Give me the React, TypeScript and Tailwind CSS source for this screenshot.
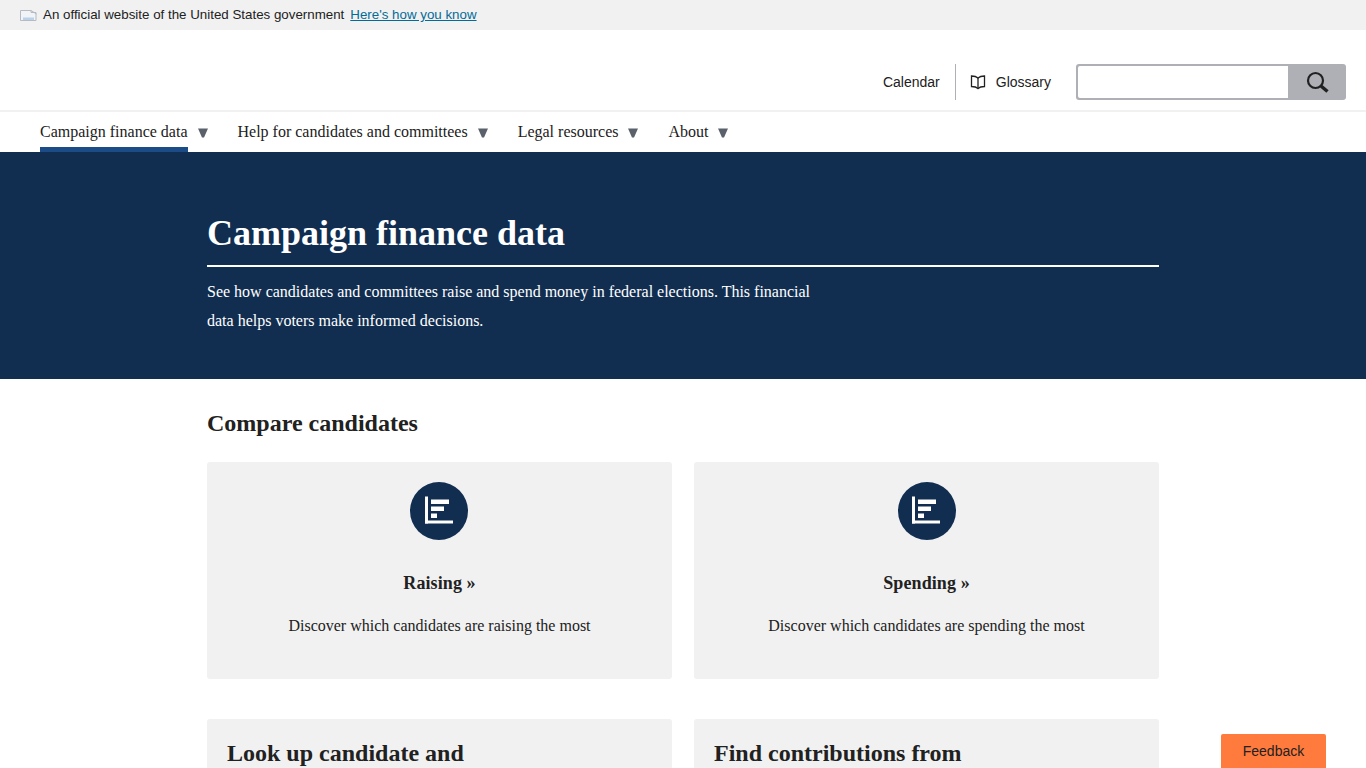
import React from "react";

const serif = "font-['Liberation_Serif',serif]";
const sans = "font-['Liberation_Sans',sans-serif]";

function Caret() {
  return (
    <svg width="10" height="10" viewBox="0 0 10 10" className="ml-[10px] mt-[1px]">
      <path d="M0 0.5H10L6 9.5H4Z" fill="#5b616b" />
    </svg>
  );
}

function NavItem({ label, active }: { label: string; active?: boolean }) {
  return (
    <div className="flex items-start h-[40px] mr-[30px]">
      <div className={`h-[40px] pt-[10px] text-[16px] leading-[20px] text-[#212121] ${active ? "border-b-[5px] border-[#1c4c87]" : ""}`}>{label}</div>
      <div className="pt-[15px] flex"><Caret /></div>
    </div>
  );
}

function ChartIcon({ first }: { first?: boolean }) {
  return (
    <div className="w-[58px] h-[58px] rounded-full bg-[#112e51] flex items-center justify-center">
      <svg width="30" height="30" viewBox="0 0 30 30" className={first ? "ml-[2px]" : ""}>
        <g fill="#fff">
          <rect x="0" y="0.5" width="3" height="27" />
          <rect x="0" y="24.5" width="28" height="3" />
          <rect x="6" y="3.5" width="18" height="4.5" />
          <rect x="6" y="10.5" width="13" height="4.5" />
          <rect x="6" y="17.5" width="6" height="4.5" />
        </g>
      </svg>
    </div>
  );
}

function Card({ title, text, first }: { title: string; text: string; first?: boolean }) {
  return (
    <div className="flex-1 h-[217px] bg-[#f1f1f1] rounded-[3px] flex flex-col items-center pt-[20px]">
      <div className={first ? "mr-[1px]" : ""}><ChartIcon first={first} /></div>
      <div className="mt-[31px] text-[18px] leading-[24px] font-bold tracking-[0.1px] text-[#212121]">{title}</div>
      <div className="mt-[19px] text-[16px] leading-[24px] text-[#212121]">{text}</div>
    </div>
  );
}

export default function App() {
  return (
    <div className={`h-screen overflow-hidden bg-white relative ${serif}`}>
      <div className={`h-[30px] bg-[#f1f1f1] flex items-center pl-[20px] text-[13.33px] text-[#212121] ${sans}`}>
        <svg width="17" height="12" viewBox="0 0 17 12" className="mr-[6px] mt-[1px]">
          <path d="M0.5 0.5H11V2.5H16L16 10.5H0.5Z" fill="#f1f3f6" stroke="#b5bac3" />
          <path d="M11 0.5L16.5 4" fill="none" stroke="#b5bac3" />
          <path d="M3 7.5H14V10H3Z" fill="#b9d2ea" />
        </svg>
        <span>An official website of the United States government</span>
        <a className="ml-[6px] underline text-[#046b99]">Here's how you know</a>
      </div>

      <div className="h-[82px] border-b-2 border-[#f1f1f1] flex justify-end items-start pt-[34px] pr-[20px]">
        <div className={`flex items-center h-[36px] text-[14px] text-[#212121] ${sans}`}>
          <span className="pr-[15px]">Calendar</span>
          <div className="w-px h-[36px] bg-[#aeb0b5]" />
          <svg width="16" height="16" viewBox="0 0 16 16" className="ml-[14px] mr-[10px]" fill="none" stroke="#212121" strokeWidth="1.3">
            <path d="M8 4C6.5 2.6 4 2 1.5 2V12.5C4 12.5 6.5 13 8 14.5C9.5 13 12 12.5 14.5 12.5V2C12 2 9.5 2.6 8 4Z" />
            <path d="M8 4V14.5" />
          </svg>
          <span>Glossary</span>
          <div className="ml-[25px] w-[270px] h-[36px] flex rounded-[3px] bg-[#aeb0b5] overflow-hidden">
            <div className="w-[210px] h-[32px] mt-[2px] ml-[2px] bg-white rounded-l-[2px]" />
            <div className="flex-1 flex items-center justify-center">
              <svg width="24" height="24" viewBox="0 0 24 24" fill="none" stroke="#212121">
                <circle cx="10.5" cy="10.5" r="7.5" strokeWidth="2.2" />
                <path d="M16 16L22.5 21.5" strokeWidth="3.4" />
              </svg>
            </div>
          </div>
        </div>
      </div>

      <nav className="h-[40px] flex pl-[40px]">
        <NavItem label="Campaign finance data" active />
        <NavItem label="Help for candidates and committees" />
        <NavItem label="Legal resources" />
        <NavItem label="About" />
      </nav>

      <section className="h-[227px] bg-[#112e51] text-white">
        <div className="w-[952px] mx-auto pt-[59px]">
          <h1 className="text-[36px] leading-[44px] font-bold pb-[10px] border-b-2 border-white">Campaign finance data</h1>
          <p className="mt-[10px] w-[620px] text-[16px] leading-[29px]">See how candidates and committees raise and spend money in federal elections. This financial data helps voters make informed decisions.</p>
        </div>
      </section>

      <main className="w-[952px] mx-auto">
        <h2 className="mt-[29px] text-[24px] leading-[30px] font-bold text-[#212121]">Compare candidates</h2>
        <div className="mt-[24px] flex gap-[22px]">
          <Card first title="Raising »" text="Discover which candidates are raising the most" />
          <Card title="Spending »" text="Discover which candidates are spending the most" />
        </div>
        <div className="mt-[40px] flex gap-[22px]">
          <div className="flex-1 h-[200px] bg-[#f1f1f1] rounded-[3px] px-[20px] pt-[19px] text-[24px] leading-[30px] font-bold text-[#212121]">Look up candidate and</div>
          <div className="flex-1 h-[200px] bg-[#f1f1f1] rounded-[3px] px-[20px] pt-[19px] text-[24px] leading-[30px] font-bold text-[#212121]">Find contributions from</div>
        </div>
      </main>

      <div className={`absolute right-[40px] bottom-0 w-[105px] h-[34px] bg-[#ff7a3d] rounded-t-[2px] flex items-center justify-center text-[14px] text-[#212121] ${sans}`}>Feedback</div>
    </div>
  );
}
